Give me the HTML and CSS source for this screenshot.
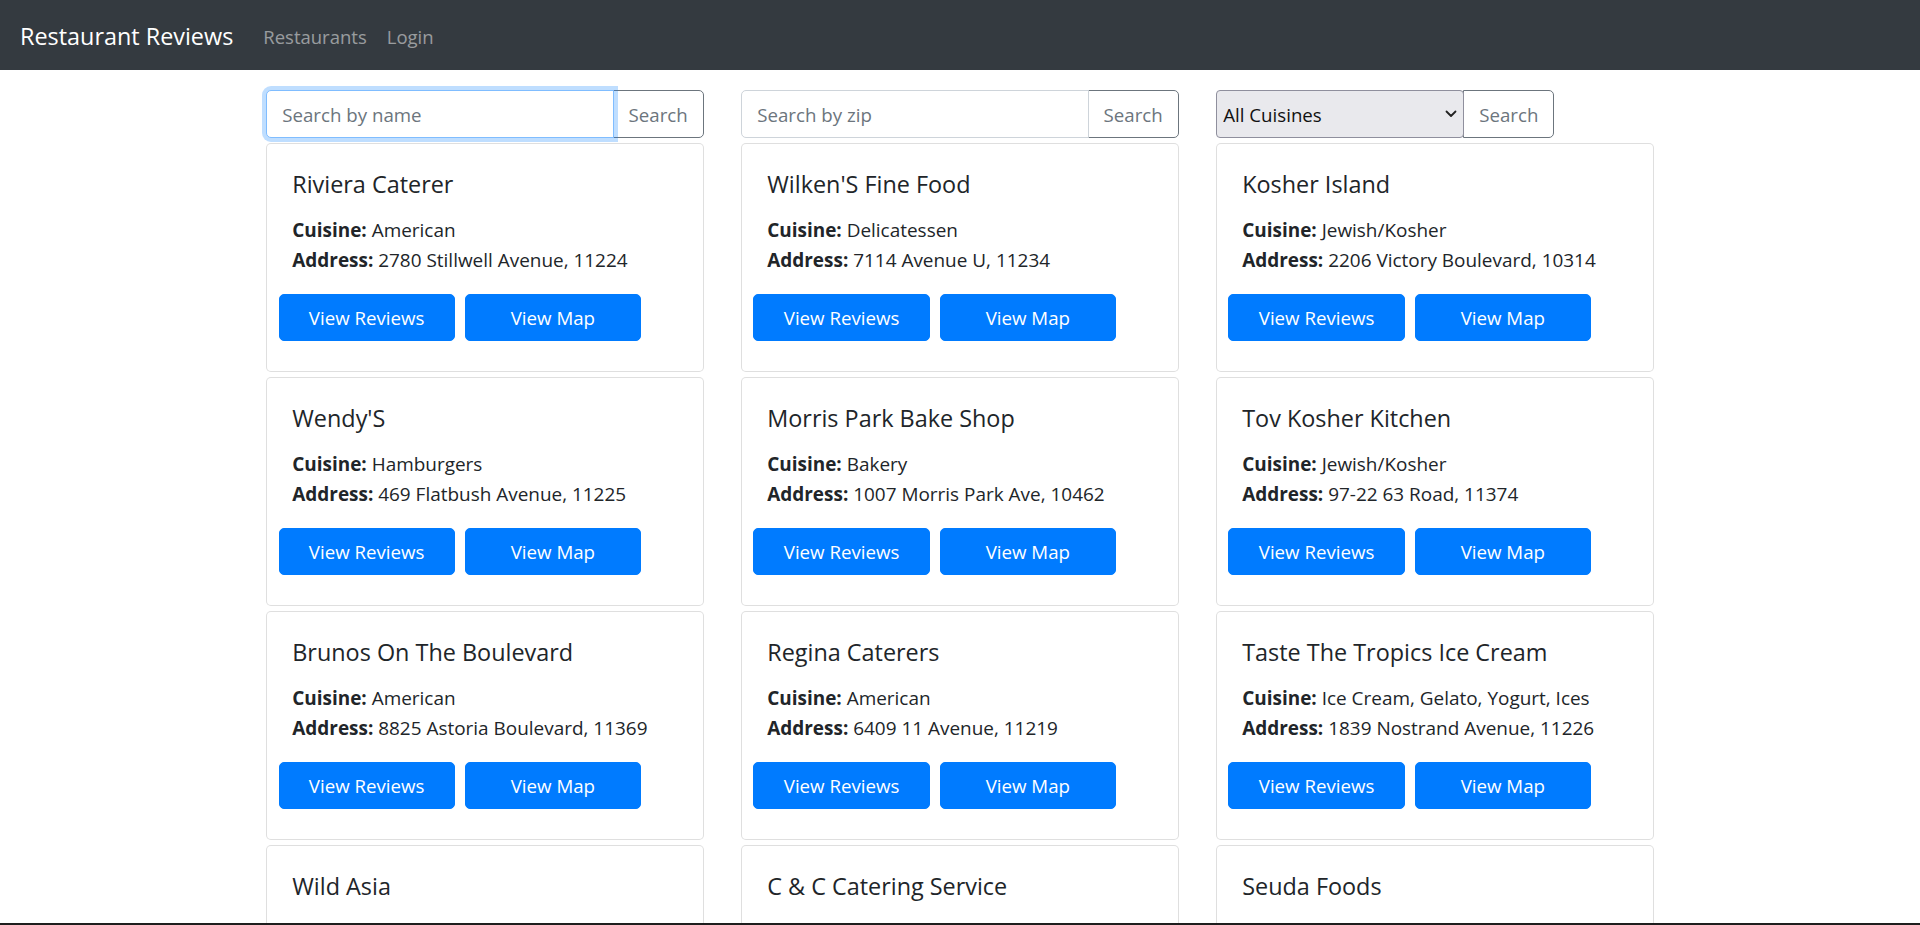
FILE: index.html
```html
<!DOCTYPE html>
<html lang="en">
<head>
<meta charset="utf-8">
<title>Restaurant Reviews</title>
<link rel="stylesheet" href="styles.css">
</head>
<body>
<nav class="navbar">
  <a class="navbar-brand" href="#">Restaurant Reviews</a>
  <div class="navbar-nav">
    <a class="nav-link" href="#">Restaurants</a>
    <a class="nav-link" href="#">Login</a>
  </div>
</nav>

<div class="container">
  <div class="row search-row">
    <div class="input-group">
      <input type="text" class="form-control is-focused" placeholder="Search by name">
      <button class="btn-outline" type="button">Search</button>
    </div>
    <div class="input-group">
      <input type="text" class="form-control" placeholder="Search by zip">
      <button class="btn-outline" type="button">Search</button>
    </div>
    <div class="input-group">
      <div class="select-wrap">
        <select class="cuisine-select">
          <option> All Cuisines </option>
          <option> American </option>
          <option> Bakery </option>
          <option> Delicatessen </option>
        </select>
        <svg class="chevron" width="12" height="8" viewBox="0 0 12 8"><path d="M1.5 1.5 L6 6 L10.5 1.5" fill="none" stroke="#222" stroke-width="1.8" stroke-linecap="round" stroke-linejoin="round"/></svg>
      </div>
      <button class="btn-outline" type="button">Search</button>
    </div>
  </div>

  <div class="row">
    <div class="col">
      <div class="card"><div class="card-body">
        <h5 class="card-title">Riviera Caterer</h5>
        <p class="card-text"><strong>Cuisine: </strong>American<br><strong>Address: </strong>2780 Stillwell Avenue, 11224</p>
        <div class="btn-row"><a class="btn-primary" href="#">View Reviews</a><a class="btn-primary" href="#">View Map</a></div>
      </div></div>
    </div>
    <div class="col">
      <div class="card"><div class="card-body">
        <h5 class="card-title">Wilken'S Fine Food</h5>
        <p class="card-text"><strong>Cuisine: </strong>Delicatessen<br><strong>Address: </strong>7114 Avenue U, 11234</p>
        <div class="btn-row"><a class="btn-primary" href="#">View Reviews</a><a class="btn-primary" href="#">View Map</a></div>
      </div></div>
    </div>
    <div class="col">
      <div class="card"><div class="card-body">
        <h5 class="card-title">Kosher Island</h5>
        <p class="card-text"><strong>Cuisine: </strong>Jewish/Kosher<br><strong>Address: </strong>2206 Victory Boulevard, 10314</p>
        <div class="btn-row"><a class="btn-primary" href="#">View Reviews</a><a class="btn-primary" href="#">View Map</a></div>
      </div></div>
    </div>

    <div class="col">
      <div class="card"><div class="card-body">
        <h5 class="card-title">Wendy'S</h5>
        <p class="card-text"><strong>Cuisine: </strong>Hamburgers<br><strong>Address: </strong>469 Flatbush Avenue, 11225</p>
        <div class="btn-row"><a class="btn-primary" href="#">View Reviews</a><a class="btn-primary" href="#">View Map</a></div>
      </div></div>
    </div>
    <div class="col">
      <div class="card"><div class="card-body">
        <h5 class="card-title">Morris Park Bake Shop</h5>
        <p class="card-text"><strong>Cuisine: </strong>Bakery<br><strong>Address: </strong>1007 Morris Park Ave, 10462</p>
        <div class="btn-row"><a class="btn-primary" href="#">View Reviews</a><a class="btn-primary" href="#">View Map</a></div>
      </div></div>
    </div>
    <div class="col">
      <div class="card"><div class="card-body">
        <h5 class="card-title">Tov Kosher Kitchen</h5>
        <p class="card-text"><strong>Cuisine: </strong>Jewish/Kosher<br><strong>Address: </strong>97-22 63 Road, 11374</p>
        <div class="btn-row"><a class="btn-primary" href="#">View Reviews</a><a class="btn-primary" href="#">View Map</a></div>
      </div></div>
    </div>

    <div class="col">
      <div class="card"><div class="card-body">
        <h5 class="card-title">Brunos On The Boulevard</h5>
        <p class="card-text"><strong>Cuisine: </strong>American<br><strong>Address: </strong>8825 Astoria Boulevard, 11369</p>
        <div class="btn-row"><a class="btn-primary" href="#">View Reviews</a><a class="btn-primary" href="#">View Map</a></div>
      </div></div>
    </div>
    <div class="col">
      <div class="card"><div class="card-body">
        <h5 class="card-title">Regina Caterers</h5>
        <p class="card-text"><strong>Cuisine: </strong>American<br><strong>Address: </strong>6409 11 Avenue, 11219</p>
        <div class="btn-row"><a class="btn-primary" href="#">View Reviews</a><a class="btn-primary" href="#">View Map</a></div>
      </div></div>
    </div>
    <div class="col">
      <div class="card"><div class="card-body">
        <h5 class="card-title">Taste The Tropics Ice Cream</h5>
        <p class="card-text"><strong>Cuisine: </strong>Ice Cream, Gelato, Yogurt, Ices<br><strong>Address: </strong>1839 Nostrand Avenue, 11226</p>
        <div class="btn-row"><a class="btn-primary" href="#">View Reviews</a><a class="btn-primary" href="#">View Map</a></div>
      </div></div>
    </div>

    <div class="col">
      <div class="card"><div class="card-body">
        <h5 class="card-title">Wild Asia</h5>
        <p class="card-text"><strong>Cuisine: </strong>American<br><strong>Address: </strong>2300 Southern Boulevard, 10460</p>
        <div class="btn-row"><a class="btn-primary" href="#">View Reviews</a><a class="btn-primary" href="#">View Map</a></div>
      </div></div>
    </div>
    <div class="col">
      <div class="card"><div class="card-body">
        <h5 class="card-title">C &amp; C Catering Service</h5>
        <p class="card-text"><strong>Cuisine: </strong>American<br><strong>Address: </strong>7715 18 Avenue, 11214</p>
        <div class="btn-row"><a class="btn-primary" href="#">View Reviews</a><a class="btn-primary" href="#">View Map</a></div>
      </div></div>
    </div>
    <div class="col">
      <div class="card"><div class="card-body">
        <h5 class="card-title">Seuda Foods</h5>
        <p class="card-text"><strong>Cuisine: </strong>Jewish/Kosher<br><strong>Address: </strong>705 Kings Highway, 11223</p>
        <div class="btn-row"><a class="btn-primary" href="#">View Reviews</a><a class="btn-primary" href="#">View Map</a></div>
      </div></div>
    </div>
  </div>
</div>
<div class="window-edge"></div>
</body>
</html>
```

FILE: styles.css
```css
* { box-sizing: border-box; }

html, body {
  margin: 0;
  padding: 0;
}

body {
  font-family: "Open Sans", "Noto Sans", "Liberation Sans", sans-serif;
  font-size: 18.7px;
  line-height: 30px;
  color: #212529;
  background: #fff;
}

a { text-decoration: none; }

/* navbar */
.navbar {
  display: flex;
  align-items: center;
  height: 70px;
  padding: 10px 20px;
  background: #343a40;
}

.navbar-brand {
  padding: 8px 0 4.5px;
  font-size: 23.4px;
  line-height: 37.5px;
  color: #fff;
  margin-right: 20px;
}

.navbar-nav {
  display: flex;
}

.nav-link {
  padding: 11.5px 10px 8.5px;
  font-size: 18.5px;
  line-height: 30px;
  color: rgba(255, 255, 255, 0.5);
}

/* layout */
.container {
  width: 1425px;
  margin: 20px auto 0;
  padding: 0 18.75px;
}

.row {
  display: flex;
  flex-wrap: wrap;
  margin: 0 -18.75px;
}

.search-row {
  padding-bottom: 5px;
}

.input-group {
  display: flex;
  align-items: stretch;
  width: 33.3333%;
  padding: 0 18.75px;
}

.form-control {
  flex: 1 1 auto;
  min-width: 0;
  height: 47.5px;
  padding: 8.5px 15px 6.5px;
  font-family: inherit;
  font-size: 18.7px;
  line-height: 30px;
  color: #495057;
  background: #fff;
  border: 1px solid #ced4da;
  border-radius: 5px 0 0 5px;
  outline: none;
  position: relative;
}

.form-control::placeholder {
  color: #6c757d;
}

.form-control.is-focused {
  border-color: #80bdff;
  box-shadow: 0 0 0 4px rgba(0, 123, 255, 0.25);
  z-index: 3;
}

.btn-outline {
  height: 47.5px;
  margin-left: -1px;
  padding: 8.5px 15px 6.5px;
  font-family: inherit;
  font-size: 18.7px;
  line-height: 30px;
  color: #6c757d;
  background: transparent;
  border: 1px solid #6c757d;
  border-radius: 0 5px 5px 0;
}

.select-wrap {
  position: relative;
  display: flex;
}

.cuisine-select {
  appearance: none;
  -webkit-appearance: none;
  width: 248px;
  height: 47.5px;
  padding: 2px 30px 0 6px;
  font-family: inherit;
  font-size: 18.7px;
  line-height: 30px;
  color: #111;
  background: #e9e9ed;
  border: 1px solid #8f8f9d;
  border-radius: 4px;
  outline: none;
}

.chevron {
  position: absolute;
  right: 7px;
  top: 20px;
  pointer-events: none;
}

/* cards */
.col {
  width: 33.3333%;
  padding: 0 18.75px 5px;
}

.card {
  background: #fff;
  border: 1px solid rgba(0, 0, 0, 0.125);
  border-radius: 5px;
}

.card-body {
  padding: 25px;
}

.card-title {
  margin: 0 0 14.5px;
  padding-top: 0.5px;
  font-size: 23.4px;
  font-weight: 400;
  line-height: 30px;
}

.card-text {
  margin: 0 0 19px;
  padding-top: 1px;
  font-size: 18.95px;
}

.card-text strong {
  font-weight: 700;
}

.btn-row {
  display: flex;
  flex-wrap: wrap;
  margin: 0 -18.75px;
}

.btn-primary {
  flex: 0 0 41.6667%;
  max-width: 41.6667%;
  margin: 0 5px 5px;
  padding: 8.5px 15px 6.5px;
  font-size: 18.7px;
  line-height: 30px;
  text-align: center;
  color: #fff;
  background: #007bff;
  border: 1px solid #007bff;
  border-radius: 5px;
}

.window-edge {
  position: fixed;
  left: 0;
  right: 0;
  bottom: 0;
  height: 2px;
  background: #1e1e1e;
}
```
